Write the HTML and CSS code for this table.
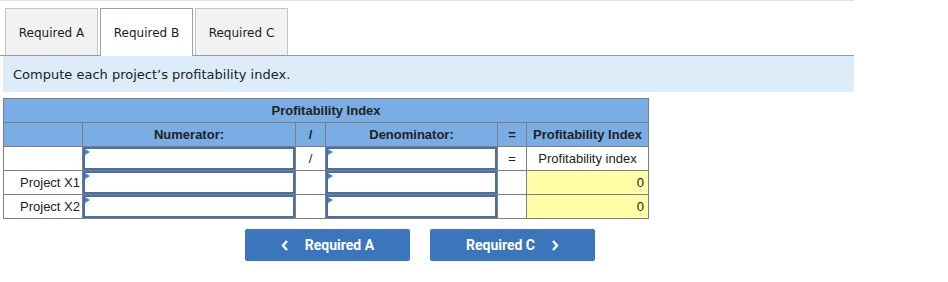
FILE: index.html
```html
<!DOCTYPE html>
<html>
<head>
<meta charset="utf-8">
<link rel="stylesheet" href="styles.css">
</head>
<body>
<div class="page">
  <div class="tabs">
    <div class="tab">Required A</div>
    <div class="tab active">Required B</div>
    <div class="tab">Required C</div>
  </div>
  <div class="info">Compute each project’s profitability index.</div>
  <table class="grid">
    <colgroup>
      <col class="c1"><col class="c2"><col class="c3"><col class="c4"><col class="c5"><col class="c6">
    </colgroup>
    <tr class="head">
      <th colspan="6">Profitability Index</th>
    </tr>
    <tr class="head">
      <th></th>
      <th>Numerator:</th>
      <th>/</th>
      <th>Denominator:</th>
      <th>=</th>
      <th>Profitability Index</th>
    </tr>
    <tr>
      <td></td>
      <td class="in"><div class="field"></div></td>
      <td class="op">/</td>
      <td class="in"><div class="field"></div></td>
      <td class="op">=</td>
      <td class="lbl">Profitability index</td>
    </tr>
    <tr>
      <td class="name">Project X1</td>
      <td class="in"><div class="field"></div></td>
      <td class="op"></td>
      <td class="in"><div class="field"></div></td>
      <td class="op"></td>
      <td class="val">0</td>
    </tr>
    <tr>
      <td class="name">Project X2</td>
      <td class="in"><div class="field"></div></td>
      <td class="op"></td>
      <td class="in"><div class="field"></div></td>
      <td class="op"></td>
      <td class="val">0</td>
    </tr>
  </table>
  <div class="nav">
    <button class="btn"><svg width="8" height="11" viewBox="0 0 8 11"><path d="M6 1 L2 5.5 L6 10" fill="none" stroke="#fff" stroke-width="2.4"/></svg><span>Required A</span></button>
    <button class="btn"><span>Required C</span><svg width="8" height="11" viewBox="0 0 8 11"><path d="M2 1 L6 5.5 L2 10" fill="none" stroke="#fff" stroke-width="2.4"/></svg></button>
  </div>
</div>
</body>
</html>
```

FILE: styles.css
```css
html, body {
  margin: 0;
  padding: 0;
  background: #fff;
}
.page {
  width: 854px;
  border-top: 1px solid #e0e0e0;
}
.tabs {
  display: flex;
  gap: 2px;
  padding: 7px 0 0 5px;
  border-bottom: 1px solid #9a9a9a;
  height: 47px;
}
.tab {
  width: 93px;
  height: 47px;
  box-sizing: border-box;
  border: 1px solid #c4c4c4;
  border-bottom: none;
  background: #f2f2f2;
  font-family: "DejaVu Sans", Verdana, sans-serif;
  font-size: 12px;
  color: #1a1a2a;
  display: flex;
  align-items: center;
  justify-content: center;
  padding-top: 1px;
}
.tab.active {
  background: #fff;
  border-color: #a0a0a0;
  height: 48px;
  margin-bottom: -1px;
  position: relative;
  padding-top: 0;
}
.info {
  margin-left: 3px;
  height: 36px;
  background: #dcecf9;
  font-family: "DejaVu Sans", Verdana, sans-serif;
  font-size: 13px;
  color: #1a1a2a;
  display: flex;
  align-items: center;
  padding-left: 10px;
}
.grid {
  margin: 6px 0 0 3px;
  border-collapse: collapse;
  table-layout: fixed;
  width: 645px;
  font-family: "Liberation Sans", Arial, sans-serif;
  font-size: 13px;
  color: #222;
}
.c1 { width: 79px; }
.c2 { width: 213px; }
.c3 { width: 30px; }
.c4 { width: 172px; }
.c5 { width: 29px; }
.c6 { width: 122px; }
.grid tr { height: 24px; }
.grid th, .grid td {
  border: 1px solid #7f7f7f;
  padding: 0;
}
.grid th {
  background: #79ade4;
  font-weight: bold;
  text-align: center;
  color: #222;
}
.grid td.name {
  text-align: right;
  padding-right: 2px;
}
.grid td.op {
  text-align: center;
}
.grid td.lbl {
  text-align: center;
}
.grid td.val {
  background: #ffffa8;
  text-align: right;
  padding-right: 4px;
}
.field {
  position: relative;
  height: 23px;
  box-sizing: border-box;
  border: 2px solid #4571a8;
  background: #fff;
}
.field::before {
  content: "";
  position: absolute;
  left: 0;
  top: 0;
  border-top: 3px solid transparent;
  border-bottom: 3px solid transparent;
  border-left: 5px solid #3d82d4;
}
.nav {
  display: flex;
  gap: 20px;
  margin: 10px 0 0 245px;
}
.btn {
  width: 165px;
  height: 32px;
  border: none;
  border-radius: 2px;
  background: #3b76bc;
  color: #fff;
  font-family: Roboto, "Liberation Sans", sans-serif;
  font-weight: bold;
  font-size: 14px;
  display: flex;
  align-items: center;
  justify-content: center;
  gap: 16px;
  padding: 0;
}
.btn svg { display: block; }
```
